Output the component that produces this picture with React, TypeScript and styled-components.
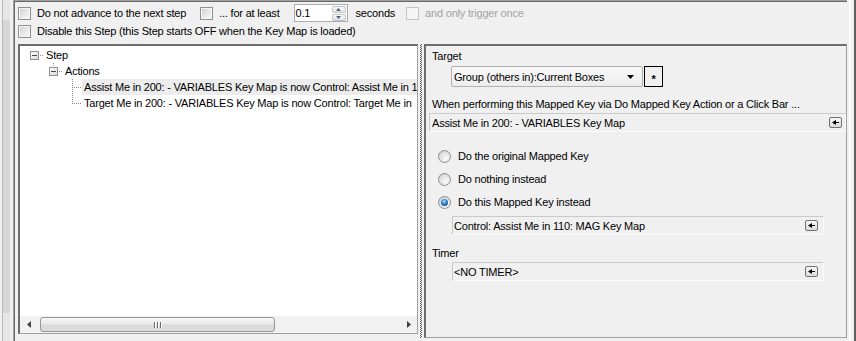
import styled, { createGlobalStyle } from 'styled-components';

const GlobalStyle = createGlobalStyle`
	html, body {
		margin: 0;
		padding: 0;
		background: #f0f0f0;
	}
	body {
		font-family: 'Liberation Sans', Arial, sans-serif;
		font-size: 11px;
		letter-spacing: -0.2px;
		color: #000;
	}
`;

const Window = styled.div`
	display: flex;
	width: 856px;
	height: 341px;
	overflow: hidden;
	background: #f0f0f0;
`;

const LeftStrip = styled.div`
	flex: none;
	width: 13px;
	box-sizing: border-box;
	padding: 0 3px 0 2px;
	display: flex;
`;

const StripBar = styled.div`
	flex: 1;
	display: flex;
	flex-direction: column;
	border-left: 1px solid #b9b9b9;
	background: #e6e6e6;
	padding: 20px 0 28px;
`;

const StripThumb = styled.div`
	flex: 1;
	background: #d7d7d7;
`;

const RightStrip = styled.div`
	flex: none;
	width: 9px;
	box-sizing: border-box;
	padding-left: 2px;
	border-right: 2px solid #5e5e5e;
	display: flex;
`;

const RightStripLine = styled.div`
	width: 2px;
	background: #fafafa;
`;

const Main = styled.div`
	flex: none;
	width: 834px;
	display: flex;
	flex-direction: column;
	box-sizing: border-box;
	border-left: 1px solid #a0a0a0;
	box-shadow: inset 1px 0 0 #696969;
`;

const TopBar = styled.div`
	flex: none;
	height: 43px;
	box-sizing: border-box;
	border-top: 1px solid #a0a0a0;
	box-shadow: inset 0 1px 0 #696969;
	padding: 3px 0 0 4px;
	display: flex;
	flex-direction: column;
	gap: 2px;
`;

const OptionRow = styled.div<{ $tall?: boolean }>`
	display: flex;
	align-items: center;
	height: ${(p) => (p.$tall ? 18 : 14)}px;
	white-space: nowrap;
`;

const Check = styled.span<{ $disabled?: boolean; $gap?: number }>`
	flex: none;
	width: 13px;
	height: 13px;
	box-sizing: border-box;
	margin-left: ${(p) => p.$gap ?? 0}px;
	border: 1px solid ${(p) => (p.$disabled ? '#c5c5c5' : '#8e8f8f')};
	box-shadow: inset 0 0 0 1px ${(p) => (p.$disabled ? '#f6f6f6' : '#f4f4f4')};
	background: ${(p) =>
		p.$disabled
			? '#f4f4f4'
			: 'linear-gradient(135deg, #c9ccd0 0%, #e6e7e8 50%, #fafafa 100%)'};
`;

const OptionText = styled.span<{ $disabled?: boolean }>`
	margin-left: 6px;
	line-height: 14px;
	color: ${(p) => (p.$disabled ? '#a3a3a3' : '#000')};
`;

const Spin = styled.div`
	flex: none;
	margin-left: 14px;
	width: 54px;
	height: 18px;
	box-sizing: border-box;
	border: 1px solid #abadb3;
	background: #fff;
	display: flex;
	align-items: center;
	justify-content: space-between;
	padding: 0 1px 0 1px;
`;

const SpinValue = styled.span`
	line-height: 14px;
`;

const SpinButtons = styled.div`
	display: flex;
	flex-direction: column;
	gap: 1px;
`;

const SpinButton = styled.span`
	width: 14px;
	height: 7px;
	box-sizing: border-box;
	border: 1px solid #c4c4c4;
	border-radius: 2px;
	background: linear-gradient(#f8f8f8, #e4e4e4);
	display: flex;
	align-items: center;
	justify-content: center;
`;

const Seconds = styled.span`
	margin-left: 8px;
	line-height: 14px;
`;

const Lower = styled.div`
	flex: 1;
	display: flex;
	align-items: flex-start;
	padding: 1px 0 0 4px;
`;

const Tree = styled.div`
	flex: none;
	width: 400px;
	height: 290px;
	box-sizing: border-box;
	border-style: solid;
	border-width: 2px 1px 1px 2px;
	border-color: #6d6d6d #a0a0a0 #a0a0a0 #6d6d6d;
	background: #fff;
	display: flex;
	flex-direction: column;
`;

const TreeBody = styled.div`
	flex: 1;
	overflow: hidden;
	padding-top: 1px;
`;

const TreeRow = styled.div<{ $level: number }>`
	display: flex;
	align-items: center;
	height: 16px;
	padding-left: ${(p) => 10 + p.$level * 19}px;
	white-space: nowrap;
	overflow: hidden;

	svg {
		flex: none;
	}
`;

const NodeText = styled.span<{ $selected?: boolean }>`
	flex: 1 1 auto;
	min-width: 0;
	overflow: hidden;
	line-height: 16px;
	padding: 0 2px;
	background: ${(p) => (p.$selected ? '#ececec' : 'transparent')};
`;

const HScroll = styled.div`
	flex: none;
	height: 17px;
	display: flex;
	background: #f1f1f1;
`;

const ScrollArrow = styled.span`
	flex: none;
	width: 17px;
	display: flex;
	align-items: center;
	justify-content: center;
`;

const ScrollThumb = styled.span`
	flex: none;
	width: 235px;
	margin: 1px 0 1px 3px;
	box-sizing: border-box;
	border: 1px solid #979797;
	border-radius: 3px;
	background: linear-gradient(#f6f6f6, #e9e9e9 45%, #d9d9d9 55%, #dcdcdc);
	display: flex;
	align-items: center;
	justify-content: center;
	gap: 1px;
`;

const Grip = styled.span`
	width: 1px;
	height: 6px;
	background: #6b6b6b;
	box-shadow: 1px 0 0 #fff;
	margin-right: 1px;
`;

const ScrollTrack = styled.span`
	flex: 1;
`;

const Splitter = styled.div`
	flex: none;
	width: 6px;
	height: 294px;
	display: flex;
	justify-content: center;
`;

const Dots = styled.div`
	width: 2px;
	height: 100%;
	background: repeating-conic-gradient(#5a5a5a 0% 25%, #f0f0f0 0% 50%) 0 0 / 2px 2px;
`;

const Panel = styled.div`
	flex: none;
	width: 423px;
	height: 294px;
	box-sizing: border-box;
	border-style: solid;
	border-width: 2px 1px 1px 2px;
	border-color: #6d6d6d #a0a0a0 #a0a0a0 #6d6d6d;
	display: flex;
	flex-direction: column;
	padding-top: 4px;
`;

const Caption = styled.div<{ $top?: number }>`
	margin-top: ${(p) => p.$top ?? 0}px;
	padding-left: 6px;
	line-height: 13px;
	white-space: nowrap;
`;

const ComboRow = styled.div`
	display: flex;
	margin-top: 3px;
	padding-left: 25px;
	gap: 1px;
`;

const Combo = styled.div`
	width: 192px;
	height: 21px;
	box-sizing: border-box;
	border: 1px solid #b2b2b2;
	border-radius: 2px;
	background: linear-gradient(#f8f8f8, #ededed);
	display: flex;
	align-items: center;
	justify-content: space-between;
	padding: 0 8px 0 2px;
`;

const StarButton = styled.div`
	width: 19px;
	height: 21px;
	box-sizing: border-box;
	border: 1px solid #000;
	display: flex;
	align-items: center;
	justify-content: center;
	font-weight: bold;
	padding-top: 5px;
`;

const Field = styled.div<{ $full?: boolean }>`
	display: flex;
	align-items: center;
	justify-content: space-between;
	height: 19px;
	box-sizing: border-box;
	margin-top: 2px;
	margin-left: ${(p) => (p.$full ? 3 : 26)}px;
	width: ${(p) => (p.$full ? 417 : 372)}px;
	padding: 0 ${(p) => (p.$full ? 3 : 5)}px 0 ${(p) => (p.$full ? 2 : 1)}px;
	border: 1px solid;
	border-color: #cacaca #fcfcfc #fcfcfc #cacaca;
	white-space: nowrap;
`;

const MiniButton = styled.span`
	flex: none;
	width: 13px;
	height: 11px;
	box-sizing: border-box;
	border: 1px solid #707070;
	border-radius: 2px;
	background: linear-gradient(#f7f7f7, #dcdcdc);
	display: flex;
	align-items: center;
	justify-content: center;
`;

const RadioList = styled.div`
	margin-top: 13px;
	display: flex;
	flex-direction: column;
`;

const RadioRow = styled.div`
	display: flex;
	align-items: center;
	height: 23px;
	padding-left: 12px;
	white-space: nowrap;
`;

const Radio = styled.span<{ $checked?: boolean }>`
	flex: none;
	width: 13px;
	height: 13px;
	box-sizing: border-box;
	border-radius: 50%;
	border: 1px solid #8e8f8f;
	background: radial-gradient(circle at 65% 70%, #fafafa 0%, #e2e2e2 55%, #c6c6c6 100%);
	display: flex;
	align-items: center;
	justify-content: center;

	&::after {
		content: '';
		display: ${(p) => (p.$checked ? 'block' : 'none')};
		width: 7px;
		height: 7px;
		border-radius: 50%;
		background: radial-gradient(circle at 45% 35%, #a6e2ff 0%, #2c7fc9 45%, #103f78 100%);
	}
`;

const RadioText = styled.span`
	margin-left: 7px;
	line-height: 13px;
`;

function Connector({ kind }: { kind: 'root' | 'branch' | 'mid' | 'last' }) {
	const dot = { stroke: '#8a8a8a', strokeDasharray: '1 1', strokeWidth: 1 };
	const expander = kind === 'root' || kind === 'branch';
	return (
		<svg width='14' height='16' viewBox='0 0 14 16'>
			<defs>
				<linearGradient id='exp' x1='0' y1='0' x2='1' y2='1'>
					<stop offset='0' stopColor='#ffffff' />
					<stop offset='1' stopColor='#d6d6d6' />
				</linearGradient>
			</defs>
			{kind === 'branch' && <line x1='4.5' y1='0' x2='4.5' y2='4' {...dot} />}
			{expander && (
				<>
					<rect x='0.5' y='4.5' width='8' height='8' fill='url(#exp)' stroke='#919191' />
					<line x1='2' y1='8.5' x2='7' y2='8.5' stroke='#3a4a66' />
					<line x1='10' y1='8.5' x2='14' y2='8.5' {...dot} />
				</>
			)}
			{!expander && (
				<>
					<line x1='4.5' y1='0' x2='4.5' y2={kind === 'mid' ? 16 : 9} {...dot} />
					<line x1='6' y1='8.5' x2='14' y2='8.5' {...dot} />
				</>
			)}
		</svg>
	);
}

function LeftArrowGlyph() {
	return (
		<svg width='4' height='7' viewBox='0 0 4 7'>
			<polygon points='4,0 0,3.5 4,7' fill='#404040' />
		</svg>
	);
}

function RightArrowGlyph() {
	return (
		<svg width='4' height='7' viewBox='0 0 4 7'>
			<polygon points='0,0 4,3.5 0,7' fill='#404040' />
		</svg>
	);
}

function PickGlyph() {
	return (
		<svg width='7' height='5' viewBox='0 0 7 5'>
			<polygon points='0,2.5 4,0 4,5' fill='#000' />
			<rect x='4' y='2' width='3' height='1' fill='#000' />
		</svg>
	);
}

function SpinArrow({ up }: { up?: boolean }) {
	return (
		<svg width='5' height='3' viewBox='0 0 5 3'>
			<polygon points={up ? '0,3 2.5,0 5,3' : '0,0 2.5,3 5,0'} fill='#4e6288' />
		</svg>
	);
}

export default function App() {
	return (
		<>
			<GlobalStyle />
			<Window>
				<LeftStrip>
					<StripBar>
						<StripThumb />
					</StripBar>
				</LeftStrip>
				<Main>
					<TopBar>
						<OptionRow $tall>
							<Check />
							<OptionText>Do not advance to the next step</OptionText>
							<Check $gap={14} />
							<OptionText>... for at least</OptionText>
							<Spin>
								<SpinValue>0.1</SpinValue>
								<SpinButtons>
									<SpinButton>
										<SpinArrow up />
									</SpinButton>
									<SpinButton>
										<SpinArrow />
									</SpinButton>
								</SpinButtons>
							</Spin>
							<Seconds>seconds</Seconds>
							<Check $disabled $gap={11} />
							<OptionText $disabled>and only trigger once</OptionText>
						</OptionRow>
						<OptionRow>
							<Check />
							<OptionText>
								Disable this Step (this Step starts OFF when the Key Map is loaded)
							</OptionText>
						</OptionRow>
					</TopBar>
					<Lower>
						<Tree>
							<TreeBody>
								<TreeRow $level={0}>
									<Connector kind='root' />
									<NodeText>Step</NodeText>
								</TreeRow>
								<TreeRow $level={1}>
									<Connector kind='branch' />
									<NodeText>Actions</NodeText>
								</TreeRow>
								<TreeRow $level={2}>
									<Connector kind='mid' />
									<NodeText $selected>
										Assist Me in 200: - VARIABLES Key Map is now Control: Assist Me in 1
									</NodeText>
								</TreeRow>
								<TreeRow $level={2}>
									<Connector kind='last' />
									<NodeText>
										Target Me in 200: - VARIABLES Key Map is now Control: Target Me in
									</NodeText>
								</TreeRow>
							</TreeBody>
							<HScroll>
								<ScrollArrow>
									<LeftArrowGlyph />
								</ScrollArrow>
								<ScrollThumb>
									<Grip />
									<Grip />
									<Grip />
								</ScrollThumb>
								<ScrollTrack />
								<ScrollArrow>
									<RightArrowGlyph />
								</ScrollArrow>
							</HScroll>
						</Tree>
						<Splitter>
							<Dots />
						</Splitter>
						<Panel>
							<Caption>Target</Caption>
							<ComboRow>
								<Combo>
									<span>Group (others in):Current Boxes</span>
									<svg width='7' height='4' viewBox='0 0 7 4'>
										<polygon points='0,0 7,0 3.5,4' fill='#000' />
									</svg>
								</Combo>
								<StarButton>*</StarButton>
							</ComboRow>
							<Caption $top={11}>
								When performing this Mapped Key via Do Mapped Key Action or a Click Bar ...
							</Caption>
							<Field $full>
								<span>Assist Me in 200: - VARIABLES Key Map</span>
								<MiniButton>
									<PickGlyph />
								</MiniButton>
							</Field>
							<RadioList>
								<RadioRow>
									<Radio />
									<RadioText>Do the original Mapped Key</RadioText>
								</RadioRow>
								<RadioRow>
									<Radio />
									<RadioText>Do nothing instead</RadioText>
								</RadioRow>
								<RadioRow>
									<Radio $checked />
									<RadioText>Do this Mapped Key instead</RadioText>
								</RadioRow>
							</RadioList>
							<Field>
								<span>Control: Assist Me in 110: MAG Key Map</span>
								<MiniButton>
									<PickGlyph />
								</MiniButton>
							</Field>
							<Caption $top={12}>Timer</Caption>
							<Field>
								<span>&lt;NO TIMER&gt;</span>
								<MiniButton>
									<PickGlyph />
								</MiniButton>
							</Field>
						</Panel>
					</Lower>
				</Main>
				<RightStrip>
					<RightStripLine />
				</RightStrip>
			</Window>
		</>
	);
}
